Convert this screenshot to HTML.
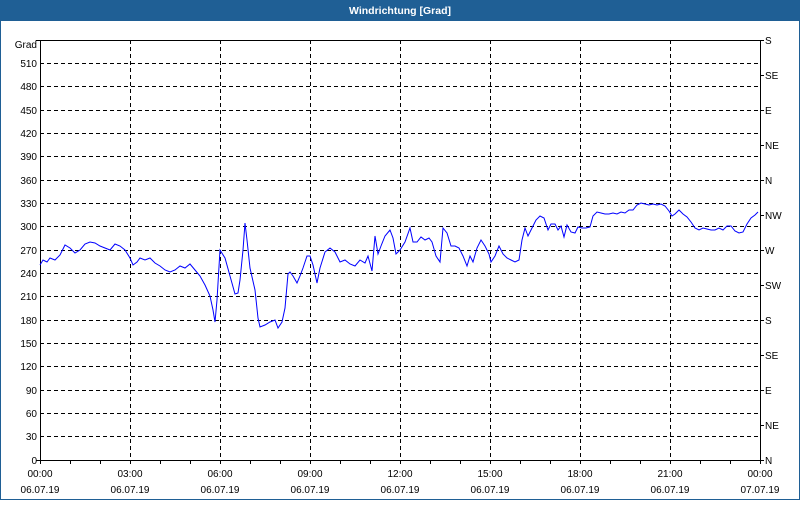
<!DOCTYPE html>
<html><head><style>
body{margin:0;width:800px;height:500px;overflow:hidden;background:#fff;font-family:"Liberation Sans",sans-serif}
</style></head><body>
<svg width="800" height="500" xmlns="http://www.w3.org/2000/svg" font-family="Liberation Sans, sans-serif" font-size="10" fill="#000">
<rect x="0" y="0" width="800" height="500" fill="#fff"/>
<rect x="0.5" y="0.5" width="799" height="499" fill="none" stroke="#1f5f95"/>
<rect x="0" y="0" width="800" height="21" fill="#1f5f95"/>
<text x="400" y="14" text-anchor="middle" fill="#fff" font-weight="bold" font-size="10.5">Windrichtung [Grad]</text>
<g stroke="#000" stroke-dasharray="4,3" stroke-width="1">
<line x1="40" y1="63.5" x2="760" y2="63.5"/><line x1="40" y1="86.5" x2="760" y2="86.5"/><line x1="40" y1="110.5" x2="760" y2="110.5"/><line x1="40" y1="133.5" x2="760" y2="133.5"/><line x1="40" y1="156.5" x2="760" y2="156.5"/><line x1="40" y1="180.5" x2="760" y2="180.5"/><line x1="40" y1="203.5" x2="760" y2="203.5"/><line x1="40" y1="226.5" x2="760" y2="226.5"/><line x1="40" y1="250.5" x2="760" y2="250.5"/><line x1="40" y1="273.5" x2="760" y2="273.5"/><line x1="40" y1="296.5" x2="760" y2="296.5"/><line x1="40" y1="320.5" x2="760" y2="320.5"/><line x1="40" y1="343.5" x2="760" y2="343.5"/><line x1="40" y1="366.5" x2="760" y2="366.5"/><line x1="40" y1="390.5" x2="760" y2="390.5"/><line x1="40" y1="413.5" x2="760" y2="413.5"/><line x1="40" y1="436.5" x2="760" y2="436.5"/>
<line x1="130.5" y1="40" x2="130.5" y2="460"/><line x1="220.5" y1="40" x2="220.5" y2="460"/><line x1="310.5" y1="40" x2="310.5" y2="460"/><line x1="400.5" y1="40" x2="400.5" y2="460"/><line x1="490.5" y1="40" x2="490.5" y2="460"/><line x1="580.5" y1="40" x2="580.5" y2="460"/><line x1="670.5" y1="40" x2="670.5" y2="460"/>
</g>
<rect x="40.5" y="40.5" width="720" height="420" fill="none" stroke="#000"/>
<g stroke="#000">
<path d="M70.5 460v4M100.5 460v4M130.5 460v4M160.5 460v4M190.5 460v4M220.5 460v4M250.5 460v4M280.5 460v4M310.5 460v4M340.5 460v4M370.5 460v4M400.5 460v4M430.5 460v4M460.5 460v4M490.5 460v4M520.5 460v4M550.5 460v4M580.5 460v4M610.5 460v4M640.5 460v4M670.5 460v4M700.5 460v4M730.5 460v4M760.5 460v4M40.5 460v4"/>
<path d="M36 460.5h4M36 40.5h4M760 40.5h4M760 75.5h4M760 110.5h4M760 145.5h4M760 180.5h4M760 215.5h4M760 250.5h4M760 285.5h4M760 320.5h4M760 355.5h4M760 390.5h4M760 425.5h4M760 460.5h4"/>
</g>
<g text-anchor="end">
<text x="37" y="48">Grad</text>
<text x="37" y="67">510</text><text x="37" y="90">480</text><text x="37" y="114">450</text><text x="37" y="137">420</text><text x="37" y="160">390</text><text x="37" y="184">360</text><text x="37" y="207">330</text><text x="37" y="230">300</text><text x="37" y="254">270</text><text x="37" y="277">240</text><text x="37" y="300">210</text><text x="37" y="324">180</text><text x="37" y="347">150</text><text x="37" y="370">120</text><text x="37" y="394">90</text><text x="37" y="417">60</text><text x="37" y="440">30</text><text x="37" y="464">0</text>
</g>
<g>
<text x="765" y="44">S</text><text x="765" y="79">SE</text><text x="765" y="114">E</text><text x="765" y="149">NE</text><text x="765" y="184">N</text><text x="765" y="219">NW</text><text x="765" y="254">W</text><text x="765" y="289">SW</text><text x="765" y="324">S</text><text x="765" y="359">SE</text><text x="765" y="394">E</text><text x="765" y="429">NE</text><text x="765" y="464">N</text>
</g>
<g text-anchor="middle">
<text x="40" y="477">00:00</text><text x="130" y="477">03:00</text><text x="220" y="477">06:00</text><text x="310" y="477">09:00</text><text x="400" y="477">12:00</text><text x="490" y="477">15:00</text><text x="580" y="477">18:00</text><text x="670" y="477">21:00</text><text x="760" y="477">00:00</text>
<text x="40" y="493">06.07.19</text><text x="130" y="493">06.07.19</text><text x="220" y="493">06.07.19</text><text x="310" y="493">06.07.19</text><text x="400" y="493">06.07.19</text><text x="490" y="493">06.07.19</text><text x="580" y="493">06.07.19</text><text x="670" y="493">06.07.19</text><text x="760" y="493">07.07.19</text>
</g>
<polyline fill="none" stroke="#0000ff" stroke-width="1" points="40,265 43,260 47,262 50,258 55,260 60,255 65,245 70,248 75,253 80,250 85,244 90,242 95,243 100,246 105,248 110,250 115,244 120,246 125,250 130,258 133,265 137,262 140,258 145,260 150,258 155,263 160,266 165,270 170,272 175,270 180,266 185,268 190,264 195,270 200,276 205,285 210,296 213,310 215,322 217,300 220,250 225,258 230,276 235,294 238,293 240,280 243,250 245,223 247,240 250,268 255,290 258,318 260,327 265,325 270,322 275,320 278,328 282,322 285,308 288,274 290,272 293,276 297,283 300,276 303,268 307,256 310,256 313,265 317,283 320,268 325,252 330,248 335,252 340,262 345,260 350,264 355,266 360,260 365,263 368,256 372,271 375,236 378,254 381,246 385,236 390,230 393,238 396,254 400,250 405,242 410,228 413,242 417,242 421,237 425,240 429,238 432,242 436,256 440,262 443,228 447,233 451,246 455,246 459,248 463,256 467,266 470,256 473,262 477,248 481,240 485,246 489,254 491,262 495,256 499,246 503,254 507,258 511,260 515,262 519,260 522,240 525,228 528,236 532,228 536,220 540,216 544,218 548,230 551,224 555,224 558,230 561,226 564,237 567,225 571,232 575,233 578,227 582,228 586,228 590,227 593,216 597,212 601,213 605,214 609,214 613,213 617,214 621,212 625,213 629,210 633,210 637,205 641,203 645,204 649,205 653,204 657,205 661,204 665,206 669,211 672,216 675,214 679,210 683,214 687,217 691,222 695,228 699,230 703,228 707,229 711,230 715,230 719,228 723,230 727,226 731,226 735,231 739,233 743,232 747,224 751,218 755,215 758,212"/>
</svg>
</body></html>
